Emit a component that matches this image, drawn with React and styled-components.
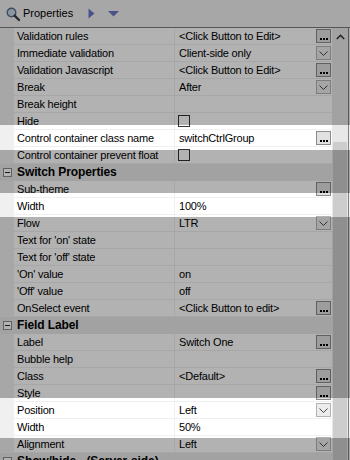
import styled, { createGlobalStyle } from "styled-components"

const GlobalStyle = createGlobalStyle`
  html, body {
    margin: 0;
    padding: 0;
    background: #f0f0f0;
  }
  body {
    font-family: "Liberation Sans", Arial, sans-serif;
  }
`

const rows = [
  { name: "Validation rules", value: "<Click Button to Edit>", btn: "dots" },
  { name: "Immediate validation", value: "Client-side only", btn: "drop" },
  { name: "Validation Javascript", value: "<Click Button to Edit>", btn: "dots" },
  { name: "Break", value: "After", btn: "drop" },
  { name: "Break height" },
  { name: "Hide", check: true },
  { name: "Control container class name", value: "switchCtrlGroup", btn: "dots" },
  { name: "Control container prevent float", check: true },
  { section: "Switch Properties" },
  { name: "Sub-theme", btn: "dots" },
  { name: "Width", value: "100%" },
  { name: "Flow", value: "LTR", btn: "drop" },
  { name: "Text for 'on' state" },
  { name: "Text for 'off' state" },
  { name: "'On' value", value: "on" },
  { name: "'Off' value", value: "off" },
  { name: "OnSelect event", value: "<Click Button to edit>", btn: "dots" },
  { section: "Field Label" },
  { name: "Label", value: "Switch One", btn: "dots" },
  { name: "Bubble help" },
  { name: "Class", value: "<Default>", btn: "dots" },
  { name: "Style", btn: "dots" },
  { name: "Position", value: "Left", btn: "drop" },
  { name: "Width", value: "50%" },
  { name: "Alignment", value: "Left", btn: "drop" },
  { section: "Show/hide - (Server-side)" },
]

// bands of the page that stay lit, top/bottom in px
const spots = [
  [125, 150],
  [193, 217],
  [398, 438],
]

const spotMask = () => {
  let stops = []
  let last = 0
  spots.forEach(([a, b]) => {
    stops.push(`#000 ${last}px ${a}px`, `transparent ${a}px ${b}px`)
    last = b
  })
  stops.push(`#000 ${last}px`)
  return `linear-gradient(to bottom, ${stops.join(", ")})`
}

export default function App() {
  return (
    <>
      <GlobalStyle />
      <Panel>
        <Header>
          <svg width="16" height="16" viewBox="0 0 16 16">
            <circle cx="6.5" cy="6.5" r="4.3" fill="#c9d6ea" stroke="#5a6d8c" strokeWidth="1.4" />
            <path d="M9.6 9.6 L14 14" stroke="#3c3c3c" strokeWidth="2.4" strokeLinecap="round" />
          </svg>
          <Title>Properties</Title>
          <NavArrow width="7" height="11" viewBox="0 0 7 11" $gap={15}>
            <path d="M0.5 0.5 L6.5 5.5 L0.5 10.5 Z" fill="#6b74c8" />
          </NavArrow>
          <NavArrow width="11" height="6" viewBox="0 0 11 6" $gap={13}>
            <path d="M0 0 L11 0 L5.5 5.5 Z" fill="#6b74c8" />
          </NavArrow>
        </Header>
        <Body>
          <Grid>
            {rows.map((r, i) =>
              r.section ? (
                <SectionRow key={i}>
                  <Toggle>
                    <span />
                  </Toggle>
                  <SectionName>{r.section}</SectionName>
                </SectionRow>
              ) : (
                <Row key={i}>
                  <Gutter />
                  <Name>{r.name}</Name>
                  <Divider />
                  <Value>
                    {r.check ? <Check /> : <ValueText>{r.value}</ValueText>}
                    {r.btn === "dots" && (
                      <DotsButton>
                        <i />
                        <i />
                        <i />
                      </DotsButton>
                    )}
                    {r.btn === "drop" && (
                      <DropButton>
                        <svg width="9" height="5" viewBox="0 0 9 5">
                          <path d="M0.5 0.5 L4.5 4.5 L8.5 0.5" fill="none" stroke="#444" strokeWidth="1" />
                        </svg>
                      </DropButton>
                    )}
                  </Value>
                </Row>
              )
            )}
          </Grid>
          <Scrollbar>
            <ArrowUp>
              <svg width="9" height="6" viewBox="0 0 9 6">
                <path d="M0.8 5 L4.5 1.3 L8.2 5" fill="none" stroke="#333" strokeWidth="1.6" />
              </svg>
            </ArrowUp>
            <Track />
            <Thumb />
          </Scrollbar>
        </Body>
        <Shade $mask={spotMask()} />
      </Panel>
    </>
  )
}

const Panel = styled.div`
  position: relative;
  width: 350px;
  height: 460px;
  overflow: hidden;
  background: #f0f0f0;
  font-size: 11px;
  letter-spacing: -0.2px;
  color: #000;
`

const Header = styled.div`
  display: flex;
  align-items: center;
  padding-left: 5px;
  box-sizing: border-box;
  height: 28px;
  border-bottom: 1px solid #7a7a7a;
  background: #f0f0f0;
`

const Title = styled.span`
  margin-left: 2px;
  font-size: 11px;
  letter-spacing: 0;
  padding-bottom: 1px;
`

const NavArrow = styled.svg`
  margin-left: ${(p) => p.$gap}px;
`

const Body = styled.div`
  display: flex;
  height: 432px;
  border-right: 1px solid #828282;
  width: 348px;
`

const Grid = styled.div`
  flex: 1;
  display: flex;
  flex-direction: column;
`

const Row = styled.div`
  display: grid;
  grid-template-columns: 14px 160px 1px 1fr;
  flex: none;
  height: 17px;
  border-bottom: 1px solid #f0f0f0;
  box-sizing: border-box;
`

const Gutter = styled.div`
  background: #f0f0f0;
`

const Name = styled.div`
  background: #fff;
  padding-left: 3px;
  line-height: 16px;
  white-space: nowrap;
  overflow: hidden;
`

const Divider = styled.div`
  background: #f0f0f0;
`

const Value = styled.div`
  background: #fff;
  display: flex;
  align-items: center;
  padding-left: 4px;
  padding-right: 1px;
  min-width: 0;
`

const ValueText = styled.span`
  flex: 1;
  line-height: 16px;
  white-space: nowrap;
  overflow: hidden;
`

const Check = styled.span`
  width: 10px;
  height: 10px;
  border: 1px solid #333;
  background: #fff;
  margin-left: -1px;
`

const DotsButton = styled.span`
  margin-left: auto;
  width: 15px;
  height: 14px;
  box-sizing: border-box;
  border: 1px solid #8a8a8a;
  background: #e1e1e1;
  display: flex;
  align-items: flex-end;
  justify-content: center;
  gap: 1px;
  padding-bottom: 2px;
  i {
    width: 2px;
    height: 2px;
    background: #000;
  }
`

const DropButton = styled.span`
  margin-left: auto;
  width: 15px;
  height: 14px;
  box-sizing: border-box;
  border: 1px solid #b4b4b4;
  background: #ececec;
  display: flex;
  align-items: center;
  justify-content: center;
  padding-top: 1px;
`

const SectionRow = styled.div`
  display: flex;
  align-items: center;
  height: 17px;
  flex: none;
  background: #e8e8e8;
`

const Toggle = styled.span`
  width: 9px;
  height: 9px;
  box-sizing: border-box;
  border: 1px solid #8c8c8c;
  background: #fff;
  margin-left: 3px;
  display: flex;
  align-items: center;
  justify-content: center;
  span {
    width: 5px;
    height: 1px;
    background: #222;
  }
`

const SectionName = styled.span`
  font-weight: bold;
  font-size: 12px;
  letter-spacing: -0.1px;
  margin-left: 5px;
  line-height: 17px;
`

const Scrollbar = styled.div`
  width: 16px;
  display: flex;
  flex-direction: column;
  background: #e8e8e8;
`

const ArrowUp = styled.div`
  height: 17px;
  display: flex;
  align-items: center;
  justify-content: center;
`

const Track = styled.div`
  height: 97px;
`

const Thumb = styled.div`
  flex: 1;
  background: #cdcdcd;
  margin: 0 1px;
`

const Shade = styled.div`
  position: absolute;
  inset: 0;
  background: rgba(0, 0, 0, 0.3);
  -webkit-mask-image: ${(p) => p.$mask};
  mask-image: ${(p) => p.$mask};
  pointer-events: none;
`
